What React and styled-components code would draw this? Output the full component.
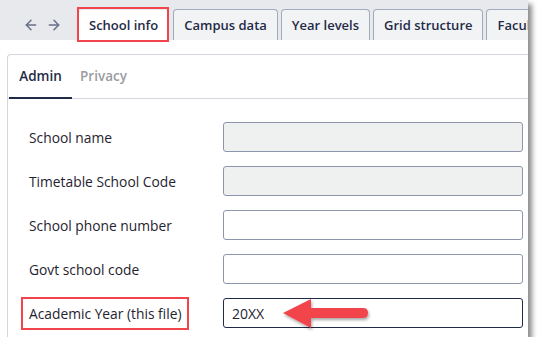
import React from "react";
import styled, { createGlobalStyle } from "styled-components";
import { ArrowLeft, ArrowRight } from "lucide-react";

const GlobalStyle = createGlobalStyle`
  body {
    margin: 0;
    background: #ffffff;
    font-family: "Open Sans", "Noto Sans", sans-serif;
  }
`;

const tabs = ["School info", "Campus data", "Year levels", "Grid structure", "Faculty"];

const fields = [
  { label: "School name", disabled: true },
  { label: "Timetable School Code", disabled: true },
  { label: "School phone number" },
  { label: "Govt school code" },
  { label: "Academic Year (this file)", value: "20XX", focused: true, marked: true },
];

const App = () => {
  return (
    <>
      <GlobalStyle />
      <Frame>
        <TopBar>
          <Nav>
            <ArrowLeft size={16} strokeWidth={2.2} />
            <ArrowRight size={16} strokeWidth={2.2} />
          </Nav>
          <TabStrip>
            {tabs.map((t, i) => (
              <Tab key={t} active={i === 0}>
                {t}
              </Tab>
            ))}
          </TabStrip>
        </TopBar>

        <Content>
          <Panel>
            <SubTabs>
              <SubTab active>Admin</SubTab>
              <SubTab>Privacy</SubTab>
            </SubTabs>

            <Form>
              {fields.map((f) => (
                <React.Fragment key={f.label}>
                  <Label marked={f.marked}>{f.label}</Label>
                  <InputWrap>
                    <Input
                      disabled={f.disabled}
                      focused={f.focused}
                      defaultValue={f.value || ""}
                      readOnly
                    />
                    {f.marked && (
                      <Pointer width="96" height="40" viewBox="0 0 96 40">
                        <defs>
                          <filter id="sh" x="-20%" y="-30%" width="150%" height="170%">
                            <feDropShadow dx="1" dy="2" stdDeviation="1.5" floodColor="#000" floodOpacity="0.35" />
                          </filter>
                        </defs>
                        <g filter="url(#sh)">
                          <path d="M4 20 L32 6 L32 15 L84 15 Q89 15 89 20 Q89 25 84 25 L32 25 L32 35 Z" fill="#f2444b" />
                        </g>
                      </Pointer>
                    )}
                  </InputWrap>
                </React.Fragment>
              ))}
            </Form>
          </Panel>
        </Content>
      </Frame>
    </>
  );
};

const Frame = styled.div`
  width: 528px;
  height: 337px;
  overflow: hidden;
  background: #ffffff;
  box-shadow: 4px 4px 5px rgba(0, 0, 0, 0.45);
  display: flex;
  flex-direction: column;
`;

const TopBar = styled.div`
  height: 40px;
  flex-shrink: 0;
  background: #e8e9ec;
  display: flex;
  align-items: flex-end;
`;

const Nav = styled.div`
  width: 79px;
  height: 31px;
  flex-shrink: 0;
  display: flex;
  align-items: center;
  gap: 7px;
  padding-left: 23px;
  box-sizing: border-box;
  color: #667086;
`;

const TabStrip = styled.div`
  display: flex;
  align-items: flex-end;
  gap: 3px;
  white-space: nowrap;
`;

const Tab = styled.div`
  position: relative;
  flex-shrink: 0;
  height: ${(p) => (p.active ? "30px" : "31px")};
  box-sizing: border-box;
  padding: 0 10px;
  display: flex;
  align-items: center;
  font-size: 13px;
  font-weight: 600;
  color: #1f2b47;
  background: ${(p) => (p.active ? "#ffffff" : "#f2f3f5")};
  border: ${(p) => (p.active ? "none" : "1px solid #a3aabb")};
  border-bottom: none;
  border-radius: 4px 4px 0 0;
  margin-right: ${(p) => (p.active ? "2px" : "0")};

  ${(p) =>
    p.active &&
    `
    &::after {
      content: "";
      position: absolute;
      left: -2px;
      right: -1px;
      top: -3px;
      bottom: -2px;
      border: 2px solid #f2444b;
    }
  `}
`;

const Content = styled.div`
  flex: 1;
  padding: 14px 0 0 7px;
  background: #ffffff;
`;

const Panel = styled.div`
  width: 560px;
  height: 100%;
  box-sizing: border-box;
  border: 1px solid #d3d7df;
  border-right: none;
  border-bottom: none;
  border-radius: 4px 0 0 0;
`;

const SubTabs = styled.div`
  display: flex;
  height: 43px;
  border-bottom: 1px solid #d3d7df;
  padding-left: 1px;
`;

const SubTab = styled.div`
  display: flex;
  align-items: center;
  justify-content: center;
  width: 63px;
  font-size: 13.5px;
  font-weight: 600;
  color: ${(p) => (p.active ? "#1f2b47" : "#9a9ca2")};
  border-bottom: ${(p) => (p.active ? "2px solid #1f2b47" : "2px solid transparent")};
  margin-bottom: -1px;
`;

const Form = styled.div`
  display: grid;
  grid-template-columns: 194px 300px;
  row-gap: 14px;
  padding: 23px 0 0 21px;
  align-items: center;
`;

const Label = styled.div`
  position: relative;
  justify-self: start;
  font-size: 13.8px;
  font-weight: 500;
  color: #1f2430;

  ${(p) =>
    p.marked &&
    `
    &::after {
      content: "";
      position: absolute;
      left: -8px;
      right: -7px;
      top: -7px;
      bottom: -7px;
      border: 2px solid #f2444b;
    }
  `}
`;

const InputWrap = styled.div`
  position: relative;
`;

const Input = styled.input`
  display: block;
  width: 300px;
  height: 30px;
  box-sizing: border-box;
  padding: 0 8px;
  font-family: "Open Sans", "Noto Sans", sans-serif;
  font-size: 14px;
  color: #1f2430;
  background: ${(p) => (p.disabled ? "#eff0f0" : "#ffffff")};
  border: 1px solid ${(p) => (p.focused ? "#1f2b47" : "#8e96ad")};
  border-radius: 3px;
  outline: none;
`;

const Pointer = styled.svg`
  position: absolute;
  left: 56px;
  top: -5px;
`;

export default App;
